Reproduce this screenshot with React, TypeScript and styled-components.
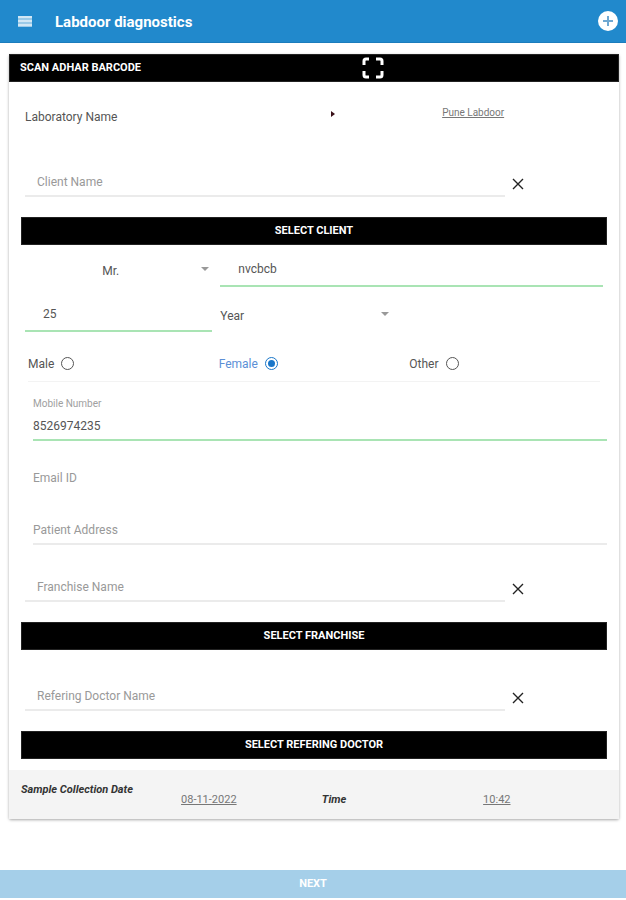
import React, { useState } from 'react';
import styled, { createGlobalStyle } from 'styled-components';

const GlobalStyle = createGlobalStyle`
  *, *::before, *::after { box-sizing: border-box; }
  body {
    margin: 0;
    background: #fff;
    color: #555;
    font-family: Roboto, "Liberation Sans", sans-serif;
    font-size: 12px;
    line-height: 16px;
  }
  button, input, select { font: inherit; color: inherit; margin: 0; }
  svg { display: block; }
`;

const Header = styled.header`
  display: flex;
  align-items: center;
  justify-content: space-between;
  gap: 22px;
  height: 43px;
  padding: 0 8px 0 17px;
  background: #2189cc;
  border-bottom: 1px solid #1b7cbc;
  color: #fff;
`;

const Title = styled.h1`
  flex: 1;
  margin: 0;
  padding-top: 2px;
  font-size: 15px;
  line-height: 20px;
  font-weight: 700;
`;

const IconButton = styled.button`
  display: grid;
  place-items: center;
  padding: 0;
  border: 0;
  background: none;
  cursor: pointer;
`;

const Card = styled.form`
  margin: 11px 7px 51px 9px;
  background: #fff;
  border-radius: 2px;
  box-shadow: 0 1px 3px rgba(0, 0, 0, 0.35);
`;

const ScanBar = styled.button`
  display: grid;
  grid-template-columns: 1fr 24px 39%;
  align-items: center;
  width: 100%;
  height: 28px;
  padding: 0 0 0 10px;
  border: 1px solid #222;
  background: #000;
  color: #fff;
  font-size: 11px;
  font-weight: 700;
  text-align: left;
  cursor: pointer;
`;

const Body = styled.div`
  padding: 0 12px 11px;
`;

const LabRow = styled.div`
  display: grid;
  grid-template-columns: 1fr 8px 46%;
  align-items: center;
  height: 62px;
  padding-left: 4px;
  margin-bottom: 22px;
`;

const LabName = styled.span`
  padding-top: 8px;
`;

const TextLink = styled.a`
  justify-self: center;
  color: #777;
  font-size: 10px;
  text-decoration: underline;
`;

const LookupRow = styled.div`
  display: grid;
  grid-template-columns: minmax(0, 1fr) 26px;
  align-items: end;
  height: 31px;
  margin-bottom: 20px;
  padding: 0 13% 0 4px;
`;

const Field = styled.input<{ $inset?: number; $line: string; $tall?: boolean }>`
  display: block;
  width: 100%;
  min-width: 0;
  height: ${p => (p.$tall ? 36 : 30)}px;
  padding: 2px 0 0 ${p => p.$inset ?? 0}px;
  border: 0;
  border-bottom: 2px solid ${p => p.$line};
  border-radius: 0;
  outline: 0;
  background: transparent;
  color: #555;
  &::placeholder { color: #999; opacity: 1; }
`;

const ActionButton = styled.button`
  display: block;
  width: 100%;
  height: 28px;
  padding: 0;
  border: 1px solid #222;
  background: #000;
  color: #fff;
  font-size: 11px;
  font-weight: 700;
  line-height: 16px;
  cursor: pointer;
`;

const Thirds = styled.div<{ $gap: number }>`
  display: grid;
  grid-template-columns: repeat(3, minmax(0, 1fr));
  column-gap: 8px;
  padding: 0 4px;
  margin-top: ${p => p.$gap}px;
`;

const WideCell = styled.div`
  grid-column: span 2;
`;

const SelectBox = styled.div<{ $centered?: boolean }>`
  display: grid;
  align-items: center;
  > * { grid-area: 1 / 1; }
  > svg { justify-self: end; margin-right: ${p => (p.$centered ? 3 : 19)}px; pointer-events: none; }
  > select {
    width: 100%;
    height: 36px;
    padding: 4px 16px 0 0;
    border: 0;
    outline: 0;
    appearance: none;
    background: transparent;
    color: #555;
    text-align-last: ${p => (p.$centered ? 'center' : 'left')};
  }
`;

const GenderGroup = styled.div`
  display: grid;
  grid-template-columns: repeat(3, minmax(0, 1fr));
  align-items: center;
  height: 36px;
  margin: 14px 7px 15px;
  border-bottom: 1px solid #f3f3f3;
`;

const GenderLabel = styled.label`
  display: flex;
  align-items: center;
  gap: 7px;
  &:has(input:checked) { color: #5b8fd6; }
`;

const Radio = styled.input`
  appearance: none;
  display: grid;
  place-items: center;
  width: 13px;
  height: 13px;
  margin: 0;
  border: 1px solid #555;
  border-radius: 50%;
  &:checked { border-color: #1976c9; }
  &:checked::before {
    content: '';
    width: 7px;
    height: 7px;
    border-radius: 50%;
    background: #1976c9;
  }
`;

const Stack = styled.div`
  display: flex;
  flex-direction: column;
  gap: 22px;
  padding-left: 12px;
  margin-bottom: 26px;
`;

const SmallLabel = styled.label`
  display: block;
  color: #a0a0a0;
  font-size: 10px;
  line-height: 14px;
`;

const Section = styled.section`
  margin-top: 30px;
`;

const Schedule = styled.div`
  display: grid;
  grid-template-columns: 5fr 5fr 5fr 8fr;
  align-items: center;
  justify-items: center;
  height: 49px;
  padding: 10px 22px 0 12px;
  background: #f4f4f4;
  color: #333;
  font-size: 11px;
`;

const Caption = styled.span<{ $lead?: boolean }>`
  font-weight: 700;
  font-style: italic;
  white-space: nowrap;
  justify-self: ${p => (p.$lead ? 'start' : 'center')};
  padding-bottom: ${p => (p.$lead ? 20 : 0)}px;
`;

const PickerButton = styled.button`
  padding: 0;
  border: 0;
  background: none;
  color: #777;
  text-decoration: underline;
  cursor: pointer;
`;

const NextButton = styled.button`
  display: block;
  width: 100%;
  height: 28px;
  padding: 0;
  border: 0;
  background: #a5cfe9;
  color: #fff;
  font-size: 11px;
  font-weight: 700;
`;

const ClearSlot = styled.span`
  padding-bottom: 6px;
`;

const MenuIcon = () => (
  <svg width="16" height="14" viewBox="0 0 16 14" fill="#fff">
    <path d="M1 2h14v11H1z" fillOpacity="0.55" />
    <path d="M1 2h14v2H1zM1 6h14v2H1zM1 10h14v2H1z" fillOpacity="0.55" />
  </svg>
);

const AddIcon = () => (
  <svg width="20" height="20" viewBox="0 0 20 20">
    <circle cx="10" cy="10" r="10" fill="#fff" />
    <path d="M10 5v10M5 10h10" stroke="#6fa8d2" strokeWidth="2" />
  </svg>
);

const ScanIcon = () => (
  <svg width="24" height="24" viewBox="0 0 24 24" fill="none" stroke="#fff" strokeWidth="3">
    <path d="M3 9V5q0-2 2-2h3M15 3h4q2 0 2 2v4M21 15v4q0 2-2 2h-4M8 21H5q-2 0-2-2v-4" />
  </svg>
);

const CloseIcon = () => (
  <svg width="14" height="14" viewBox="0 0 14 14" stroke="#222" strokeWidth="1.4">
    <path d="M2 2l10 10M12 2L2 12" />
  </svg>
);

const CaretDown = () => (
  <svg width="8" height="5" viewBox="0 0 8 5" fill="#999">
    <path d="M0 0h8L4 4z" />
  </svg>
);

const CaretRight = () => (
  <svg width="8" height="8" viewBox="0 0 8 8" fill="#3a1018">
    <path d="M0 2l4 3-4 3z" />
  </svg>
);

function Lookup({ label, action }: { label: string; action: string }) {
  const [value, setValue] = useState('');
  return (
    <>
      <LookupRow>
        <Field
          $inset={12}
          $line="#ebebeb"
          aria-label={label}
          placeholder={label}
          value={value}
          onChange={e => setValue(e.target.value)}
        />
        <IconButton type="button" aria-label={`Clear ${label}`} onClick={() => setValue('')}>
          <ClearSlot><CloseIcon /></ClearSlot>
        </IconButton>
      </LookupRow>
      <ActionButton type="button">{action}</ActionButton>
    </>
  );
}

export default function App() {
  const [gender, setGender] = useState('Female');
  return (
    <>
      <GlobalStyle />
      <Header>
        <IconButton type="button" aria-label="Menu"><MenuIcon /></IconButton>
        <Title>Labdoor diagnostics</Title>
        <IconButton type="button" aria-label="Add"><AddIcon /></IconButton>
      </Header>
      <main>
        <Card id="patient" onSubmit={e => e.preventDefault()}>
          <ScanBar type="button">
            <span>SCAN ADHAR BARCODE</span>
            <ScanIcon />
          </ScanBar>
          <Body>
            <LabRow>
              <LabName>Laboratory Name</LabName>
              <CaretRight />
              <TextLink href="#lab">Pune Labdoor</TextLink>
            </LabRow>
            <Lookup label="Client Name" action="SELECT CLIENT" />
            <Thirds $gap={6}>
              <SelectBox $centered>
                <select aria-label="Title" defaultValue="Mr.">
                  <option>Mr.</option>
                  <option>Mrs.</option>
                </select>
                <CaretDown />
              </SelectBox>
              <WideCell>
                <Field $tall $inset={18} $line="#a9e4b4" aria-label="Patient Name" defaultValue="nvcbcb" />
              </WideCell>
            </Thirds>
            <Thirds $gap={9}>
              <Field $tall $inset={18} $line="#a9e4b4" aria-label="Age" defaultValue="25" />
              <SelectBox>
                <select aria-label="Age Unit" defaultValue="Year">
                  <option>Year</option>
                  <option>Month</option>
                </select>
                <CaretDown />
              </SelectBox>
            </Thirds>
            <GenderGroup role="radiogroup" aria-label="Gender">
              {['Male', 'Female', 'Other'].map(g => (
                <GenderLabel key={g}>
                  {g}
                  <Radio type="radio" name="gender" checked={gender === g} onChange={() => setGender(g)} />
                </GenderLabel>
              ))}
            </GenderGroup>
            <Stack>
              <div>
                <SmallLabel htmlFor="mobile">Mobile Number</SmallLabel>
                <Field id="mobile" type="tel" $line="#a9e4b4" defaultValue="8526974235" />
              </div>
              <Field type="email" $line="transparent" aria-label="Email ID" placeholder="Email ID" />
              <Field $line="#ebebeb" aria-label="Patient Address" placeholder="Patient Address" />
            </Stack>
            <Lookup label="Franchise Name" action="SELECT FRANCHISE" />
            <Section>
              <Lookup label="Refering Doctor Name" action="SELECT REFERING DOCTOR" />
            </Section>
          </Body>
          <Schedule>
            <Caption $lead>Sample Collection Date</Caption>
            <PickerButton type="button">08-11-2022</PickerButton>
            <Caption>Time</Caption>
            <PickerButton type="button">10:42</PickerButton>
          </Schedule>
        </Card>
        <NextButton type="submit" form="patient">NEXT</NextButton>
      </main>
    </>
  );
}
